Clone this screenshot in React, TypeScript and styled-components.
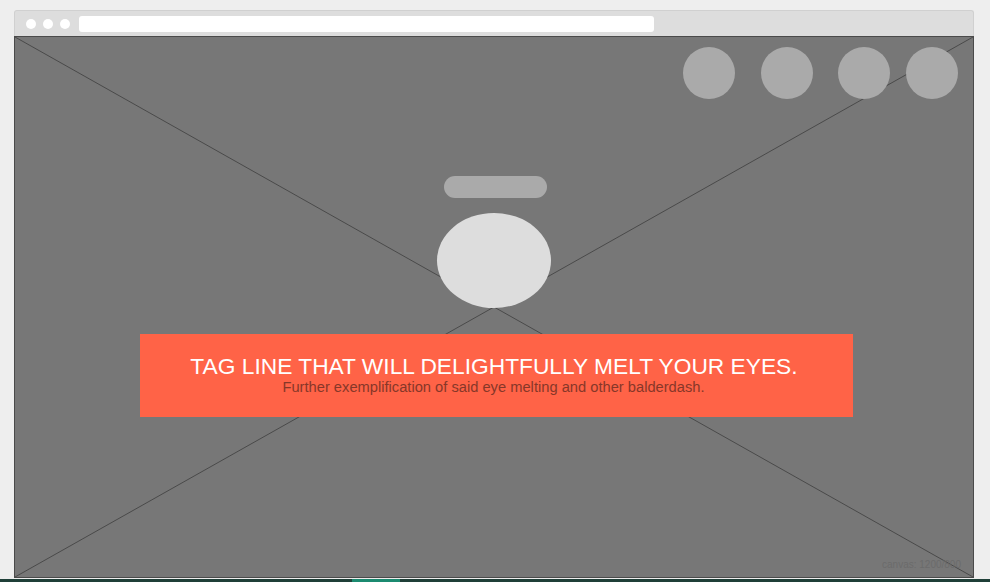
import React from "react";
import styled, { createGlobalStyle } from "styled-components";

const Global = createGlobalStyle`
  html, body { margin: 0; padding: 0; background: #eeeeee; }
  body { width: 990px; height: 582px; overflow: hidden; font-family: "Liberation Sans", Arial, sans-serif; }
`;

const Page = styled.div`
  display: flex;
  flex-direction: column;
  height: 582px;
  padding: 10px 0 0 14px;
  box-sizing: border-box;
`;

const BrowserWindow = styled.div`
  width: 960px;
  display: flex;
  flex-direction: column;
`;

const TitleBar = styled.div`
  height: 26px;
  box-sizing: border-box;
  background: #dddddd;
  border: 1px solid #d0d0d0;
  border-bottom: none;
  border-radius: 3px 3px 0 0;
  display: flex;
  align-items: center;
  padding-left: 11px;
  gap: 7px;
`;

const Dot = styled.span`
  width: 10px;
  height: 10px;
  border-radius: 50%;
  background: #ffffff;
  flex: none;
`;

const AddressBar = styled.div`
  margin-left: 2px;
  width: 575px;
  height: 16px;
  border-radius: 3px;
  background: #ffffff;
`;

const Canvas = styled.div`
  position: relative;
  height: 542px;
  box-sizing: border-box;
  background: #777777;
  border: 1px solid #4a4a4a;
  display: flex;
  flex-direction: column;
  align-items: center;
  overflow: hidden;
`;

const Cross = styled.svg`
  position: absolute;
  inset: 0;
  width: 100%;
  height: 100%;
  pointer-events: none;
`;

const SocialRow = styled.div`
  position: relative;
  align-self: flex-end;
  display: flex;
  padding: 10px 15px 0 0;
`;

const SocialCircle = styled.span<{ $gap: number }>`
  width: 52px;
  height: 52px;
  border-radius: 50%;
  background: #aaaaaa;
  margin-left: ${(p) => p.$gap}px;
`;

const Hero = styled.div`
  position: relative;
  display: flex;
  flex-direction: column;
  align-items: center;
  margin-top: 77px;
`;

const Pill = styled.div`
  width: 103px;
  height: 22px;
  border-radius: 11px;
  background: #aaaaaa;
  margin-left: 3px;
`;

const Logo = styled.div`
  width: 114px;
  height: 95px;
  border-radius: 50%;
  background: #dddddd;
  margin-top: 15px;
`;

const Banner = styled.div`
  width: 713px;
  height: 83px;
  box-sizing: border-box;
  margin-top: 26px;
  margin-left: 5px;
  background: #ff6347;
  display: flex;
  flex-direction: column;
  align-items: center;
  padding-top: 20px;
`;

const TagLine = styled.h1`
  margin: 0;
  font-size: 22.75px;
  line-height: 25px;
  font-weight: normal;
  color: #ffffff;
  margin-left: -5px;
`;

const SubLine = styled.p`
  margin: 0;
  font-size: 14.7px;
  line-height: 16px;
  color: #7a3326;
  opacity: 0.9;
  margin-left: -6px;
`;

const CanvasLabel = styled.div`
  position: relative;
  margin-top: auto;
  align-self: flex-end;
  margin-right: 12px;
  margin-bottom: 7px;
  font-size: 10px;
  color: #6b6b6b;
`;

const Taskbar = styled.div`
  margin-top: auto;
  height: 3px;
  margin-left: -14px;
  width: 990px;
  background: #1f3f38;
  display: flex;
`;

const TaskItem = styled.span`
  margin-left: 352px;
  width: 48px;
  background: #1b8a70;
`;

export default function App() {
  const gaps = [0, 26, 25, 16];
  return (
    <>
      <Global />
      <Page>
        <BrowserWindow>
          <TitleBar>
            <Dot />
            <Dot />
            <Dot />
            <AddressBar />
          </TitleBar>
          <Canvas>
            <Cross viewBox="0 0 958 540" preserveAspectRatio="none">
              <line x1="0" y1="0" x2="958" y2="540" stroke="#4a4a4a" strokeWidth="1" />
              <line x1="958" y1="0" x2="0" y2="540" stroke="#4a4a4a" strokeWidth="1" />
            </Cross>
            <SocialRow>
              {gaps.map((g, i) => (
                <SocialCircle key={i} $gap={g} />
              ))}
            </SocialRow>
            <Hero>
              <Pill />
              <Logo />
              <Banner>
                <TagLine>TAG LINE THAT WILL DELIGHTFULLY MELT YOUR EYES.</TagLine>
                <SubLine>Further exemplification of said eye melting and other balderdash.</SubLine>
              </Banner>
            </Hero>
            <CanvasLabel>canvas: 1200/800</CanvasLabel>
          </Canvas>
        </BrowserWindow>
        <Taskbar>
          <TaskItem />
        </Taskbar>
      </Page>
    </>
  );
}
